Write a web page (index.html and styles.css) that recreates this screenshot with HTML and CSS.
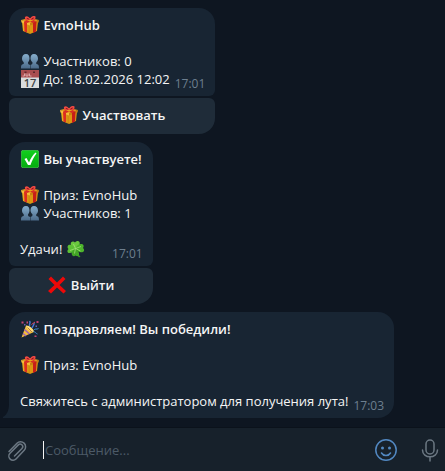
FILE: index.html
```html
<!DOCTYPE html>
<html lang="ru">
<head>
    <meta charset="UTF-8">
    <meta name="viewport" content="width=device-width, initial-scale=1.0">
    <title>EvnoHub</title>
    <link rel="stylesheet" href="styles.css">
</head>
<body>
    <svg class="sprite" aria-hidden="true">
        <defs>
            <linearGradient id="gold" x1="0" x2="1">
                <stop offset="0" stop-color="#f3b21d"/>
                <stop offset="1" stop-color="#cf8a10"/>
            </linearGradient>
            <linearGradient id="person" x1="0" y1="0" x2="0" y2="1">
                <stop offset="0" stop-color="#86aecd"/>
                <stop offset="1" stop-color="#4b6a89"/>
            </linearGradient>
            <linearGradient id="green" x1="0" y1="0" x2="0" y2="1">
                <stop offset="0" stop-color="#12cf1e"/>
                <stop offset="1" stop-color="#05ac10"/>
            </linearGradient>
        </defs>

        <symbol id="gift" viewBox="0 0 36 36">
            <path d="M2 11l16 4v21L4 30z" fill="url(#gold)"/>
            <path d="M34 11l-16 4v21l14-6z" fill="#dc9712"/>
            <path d="M0 8l17-4 19 4-18 7z" fill="#e9a41b"/>
            <path d="M0 8l18 6v5L1 13z" fill="#f7bd38"/>
            <path d="M36 8l-18 6v5l17-6z" fill="#c98110"/>
            <path d="M6 11l6 2v20l-5-2z" fill="#dd2c20"/>
            <path d="M24 13l7-2-1 20-6 3z" fill="#c81d18"/>
            <path d="M6 10L25 4l5 2-18 8zM30 10L11 4 7 6l17 8z" fill="#d92a24"/>
            <path d="M18 8C10 9 7 6 8 2c3-3 8-1 10 4 2-5 7-8 11-5 1 5-3 8-11 7z" fill="#f04a43"/>
            <path d="M11 4c3 0 5 1 6 3-3 0-5-1-6-3zM26 3c-3 0-5 2-6 4 3 0 5-1 6-4z" fill="#8f1518"/>
        </symbol>

        <symbol id="people" viewBox="0 0 36 36">
            <path d="M10 4c5 0 7 4 7 9 0 4-2 6-3 8 0 3 1 4 4 5v7H0c0-7 1-8 5-9 1-1 1-2 0-4-2-2-3-4-3-7 0-5 3-9 8-9z" fill="url(#person)"/>
            <path d="M26 4c5 0 8 4 8 9 0 3-1 5-3 7-1 2-1 3 0 4 4 1 5 2 5 9H19v-7c3-1 4-2 4-5-1-2-4-4-4-8 0-5 2-9 7-9z" fill="url(#person)"/>
        </symbol>

        <symbol id="check" viewBox="0 0 36 36">
            <rect x="0.5" y="0.5" width="35" height="35" rx="4" fill="url(#green)" stroke="#63dd67"/>
            <path d="M7 18l4-2 5 9C19 17 23 11 29 5l2 2c-5 6-9 14-12 23h-5z" fill="#fff"/>
        </symbol>

        <symbol id="clover" viewBox="0 0 36 36">
            <path d="M17 17c2 7 5 12 10 16l-3 2c-5-5-8-10-9-17z" fill="#3a9d22"/>
            <path d="M17 17C10 15 6 10 8 5c3-3 6-2 8 0 3-4 7-4 9-1 2 5-2 10-8 13z" fill="#6cc93f"/>
            <path d="M17 17c2-6 7-10 13-9 4 2 4 5 2 8 3 3 3 6 0 8-6 2-12-1-15-7z" fill="#4db52c"/>
            <path d="M17 17C14 11 8 8 3 10c-3 3-2 6 0 8-3 3-3 6 0 8 6 1 12-3 14-9z" fill="#5cc035"/>
            <path d="M17 17c-6 3-9 8-7 13 2 3 5 3 7 1 3 2 6 2 7-1 1-5-2-10-7-13z" fill="#43a626"/>
            <path d="M17 17L13 8M17 17l11-4M17 17L6 21M17 17l-2 10M17 17l10 5" fill="none" stroke="#a6e47a" stroke-width="1.5"/>
        </symbol>

        <symbol id="cross" viewBox="0 0 36 36">
            <path d="M6 1l12 12L30 1l5 5-12 12 13 12-5 5-13-12L6 35l-6-5 13-12L1 6z" fill="#ee0808"/>
        </symbol>

        <symbol id="party" viewBox="0 0 36 36">
            <path d="M10 11L1 35l25-11c-5-2-12-8-16-13z" fill="#f3bd3a"/>
            <path d="M10 11c6-1 16 7 16 13-6 1-16-7-16-13z" fill="#ffdf79"/>
            <path d="M7 19l10 9M4 27l6 5" stroke="#9960b5" stroke-width="3"/>
            <path d="M13 15l9 9" stroke="#b87a43" stroke-width="2"/>
            <path d="M18 12c-4-3 3-6-1-10M22 16c1-4 5-5 4-10" fill="none" stroke="#4b77d3" stroke-width="3"/>
            <path d="M26 20c2-4 5 0 9-3M25 23c4 1 5 4 8 5" fill="none" stroke="#3f8bd3" stroke-width="2"/>
            <path d="M21 9l7-5" stroke="#db4760" stroke-width="2"/>
            <path d="M1 3h4v4H1zM31 2h4v4h-4zM11 3h3v4h-3zM27 31h4v3h-4z" fill="#c34371"/>
            <path d="M6 8h3v3H6zM29 11h3v3h-3z" fill="#6c5fb6"/>
        </symbol>
    </svg>

    <main class="chat">
        <div class="message">
            <div class="bubble has-keyboard">
                <p class="line title"><svg class="emoji"><use href="#gift"/></svg> EvnoHub</p>
                <p class="line"></p>
                <p class="line"><svg class="emoji"><use href="#people"/></svg> Участников: 0</p>
                <div class="last-line">
                    <p class="line">
                        <svg class="emoji" viewBox="0 0 36 36">
                            <path d="M0 0h36v36H0z" fill="#d9dcdd"/>
                            <path d="M0 0h36v15H0z" fill="#a94d50"/>
                            <path d="M24 3h4v3h-4zM7 3h4v3H7z" fill="#5c272c"/>
                            <path d="M7 7v5H3M10 7v5h4V7M17 7v5h4" fill="none" stroke="#d9a5a6" stroke-width="2"/>
                            <text class="calendar-day" x="18" y="34" text-anchor="middle">17</text>
                        </svg>
                        До: 18.02.2026 12:02
                    </p>
                    <time class="time">17:01</time>
                </div>
            </div>
            <button class="keyboard-btn" type="button"><svg class="emoji"><use href="#gift"/></svg> Участвовать</button>
        </div>

        <div class="message">
            <div class="bubble has-keyboard">
                <p class="line title"><svg class="emoji"><use href="#check"/></svg> Вы участвуете!</p>
                <p class="line"></p>
                <p class="line"><svg class="emoji"><use href="#gift"/></svg> Приз: EvnoHub</p>
                <p class="line"><svg class="emoji"><use href="#people"/></svg> Участников: 1</p>
                <p class="line"></p>
                <div class="last-line">
                    <p class="line">Удачи! <svg class="emoji"><use href="#clover"/></svg></p>
                    <time class="time">17:01</time>
                </div>
            </div>
            <button class="keyboard-btn" type="button"><svg class="emoji"><use href="#cross"/></svg> Выйти</button>
        </div>

        <div class="message">
            <div class="bubble has-tail">
                <p class="line title"><svg class="emoji"><use href="#party"/></svg> Поздравляем! Вы победили!</p>
                <p class="line"></p>
                <p class="line"><svg class="emoji"><use href="#gift"/></svg> Приз: EvnoHub</p>
                <p class="line"></p>
                <div class="last-line">
                    <p class="line">Свяжитесь с администратором для получения лута!</p>
                    <time class="time">17:03</time>
                </div>
                <svg class="tail" viewBox="0 0 7 14"><path d="M7 0H6C6 6 4 11 0 13v1h7z"/></svg>
            </div>
        </div>
    </main>

    <form class="composer">
        <button class="icon-btn" type="button" aria-label="Прикрепить файл">
            <svg width="24" height="24" viewBox="0 0 24 24">
                <path d="M4 13.500L12 5.300a4.900 4.900 0 0 1 7.200 6.900L11 21a4 4 0 0 1-6-5.700l8.300-8.400a2.500 2.500 0 0 1 3.700 3.500L9.500 18"/>
            </svg>
        </button>
        <input class="message-input" type="text" placeholder="Сообщение..." aria-label="Сообщение">
        <button class="icon-btn smile" type="button" aria-label="Эмодзи">
            <svg width="24" height="24" viewBox="0 0 24 24">
                <circle cx="12" cy="12" r="10.2"/>
                <path d="M7.500 15c2 3.300 7 3.300 9 0"/>
                <circle class="eye" cx="8.500" cy="10" r="1.500"/>
                <circle class="eye" cx="15.500" cy="10" r="1.500"/>
            </svg>
        </button>
        <button class="icon-btn" type="button" aria-label="Голосовое сообщение">
            <svg width="24" height="24" viewBox="0 0 24 24">
                <rect x="8" y="2" width="8" height="14" rx="4"/>
                <path d="M4.500 12c0 9 15 9 15 0M12 19v4"/>
            </svg>
        </button>
    </form>
</body>
</html>
```
FILE: styles.css
```css
:root {
    --bg: #0e1621;
    --bubble: #182533;
    --keyboard: #1f2c39;
    --composer: #17212b;
    --text: #f5f5f5;
    --muted: #6d7f8f;
    --icon: #6c7883;
    --blue: #5288c1;
}

* {
    box-sizing: border-box;
}

body {
    display: flex;
    flex-direction: column;
    min-height: 100vh;
    margin: 0;
    background: var(--bg);
    color: var(--text);
    font-family: "Open Sans", "Noto Sans", sans-serif;
    font-size: 13px;
    line-height: 18px;
}

.sprite {
    position: absolute;
    width: 0;
    height: 0;
}

.chat {
    flex: 1;
    display: flex;
    flex-direction: column;
    align-items: flex-start;
    gap: 8px;
    padding: 8px 9px;
}

.message {
    display: flex;
    flex-direction: column;
    gap: 2px;
}

.bubble {
    position: relative;
    padding: 8px 11px;
    background: var(--bubble);
    border-radius: 16px;
}

.has-keyboard {
    border-radius: 16px 16px 6px 6px;
}

.has-tail {
    border-bottom-left-radius: 0;
}

.tail {
    position: absolute;
    left: -6px;
    bottom: 0;
    width: 7px;
    height: 14px;
    fill: var(--bubble);
}

.line {
    min-height: 18px;
    margin: 0;
}

.title {
    font-weight: 600;
}

.last-line {
    display: flex;
    justify-content: space-between;
    gap: 5px;
}

.time {
    margin: 5px -1px -5px 0;
    color: var(--muted);
    font-size: 12px;
}

.emoji {
    width: 18px;
    height: 18px;
    margin: 0 1px;
    vertical-align: top;
}

.calendar-day {
    fill: #3f4347;
    font: 600 22px "Open Sans", sans-serif;
}

.keyboard-btn {
    padding: 8px 11px 10px;
    border: none;
    border-radius: 6px 6px 16px 16px;
    background: var(--keyboard);
    color: var(--text);
    font: inherit;
    font-weight: 600;
    cursor: pointer;
}

.composer {
    display: flex;
    align-items: center;
    height: 43px;
    padding: 1px 3px 0 5px;
    background: var(--composer);
    box-shadow: 0 -1px 0 #0b121b;
}

.icon-btn {
    display: flex;
    padding: 0;
    border: none;
    background: none;
    cursor: pointer;
}

.icon-btn svg {
    fill: none;
    stroke: var(--icon);
    stroke-width: 1.5;
    stroke-linecap: round;
}

.icon-btn.smile {
    margin-right: 20px;
}

.smile svg {
    stroke: var(--blue);
}

.smile .eye {
    fill: var(--blue);
    stroke: none;
}

/* left border doubles as the text cursor */
.message-input {
    flex: 1;
    min-width: 0;
    height: 18px;
    margin: 0 14px;
    padding: 0 0 0 1px;
    border: none;
    border-left: 1px solid var(--text);
    outline: none;
    background: none;
    color: var(--text);
    font: inherit;
}

.message-input::placeholder {
    color: #4c5a67;
    opacity: 1;
}
```
